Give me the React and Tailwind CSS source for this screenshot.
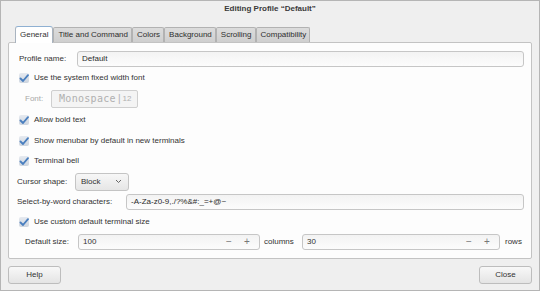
import React from 'react';

const FONT = { fontFamily: '"Liberation Sans", Arial, sans-serif' };

function Check() {
  return (
    <span className="w-[10px] h-[10px] rounded-[2px] bg-gradient-to-b from-[#e6eaf0] to-[#cdd5df] flex items-center justify-center shrink-0">
      <svg width="10" height="9" viewBox="0 0 10 9">
        <path d="M1.5 4.5 L4 7 L9 1.2" fill="none" stroke="#4a7fbf" strokeWidth="1.8" strokeLinecap="round" strokeLinejoin="round" />
      </svg>
    </span>
  );
}

function CheckRow({ label, h }) {
  return (
    <div className={`flex items-center gap-[5px] pl-[10px] ${h}`}>
      <Check />
      <span>{label}</span>
    </div>
  );
}

function Field({ value, className = '' }) {
  return (
    <div className={`h-[16px] border border-[#c6c6c6] rounded-[3px] bg-gradient-to-b from-[#f3f3f3] to-[#fcfcfc] flex items-center px-[4px] text-[#2a2a2a] ${className}`}>
      {value}
    </div>
  );
}

function Spin({ value, className = '' }) {
  return (
    <div className={`h-[16px] border border-[#c6c6c6] rounded-[3px] bg-gradient-to-b from-[#f3f3f3] to-[#fcfcfc] flex items-center pl-[4px] pr-[3px] ${className}`}>
      <span className="flex-1">{value}</span>
      <span className="w-[18px] text-center text-[#777] text-[10px]">−</span>
      <span className="w-[18px] text-center text-[#777] text-[10px]">+</span>
    </div>
  );
}

const tabs = ['Title and Command', 'Colors', 'Background', 'Scrolling', 'Compatibility'];

export default function App() {
  return (
    <div style={FONT} className="w-[540px] h-[291px] bg-[#efefef] border border-[#b5b5b5] flex flex-col text-[8px] text-[#333] leading-none overflow-hidden">
      {/* Title */}
      <div className="h-[16px] flex items-center justify-center font-bold text-[#3a3a3a]">
        Editing Profile “Default”
      </div>

      {/* Tabs */}
      <div className="h-[25px] flex items-end pl-[14px] relative z-10">
        <div className="h-[17px] px-[4px] flex items-center bg-white border border-b-0 border-[#a9b4c0] border-t-[#8fb0d2] rounded-t-[3px] -mb-px">
          General
        </div>
        {tabs.map((t) => (
          <div key={t} className="h-[15px] pl-[4px] pr-[3px] flex items-center bg-gradient-to-b from-[#dcdcdc] to-[#cfcfcf] border border-b-0 border-[#b2b2b2] rounded-t-[2px] text-[#2e2e2e]">
            {t}
          </div>
        ))}
      </div>

      {/* Panel */}
      <div className="mx-[7px] h-[217px] bg-[#fdfdfd] border border-[#c3c3c3] rounded-[2px] pt-[7px] flex flex-col">
        <div className="h-[17px] flex items-center pl-[10px] pr-[7px]">
          <span className="w-[58px]">Profile name:</span>
          <Field value="Default" className="flex-1" />
        </div>
        <CheckRow label="Use the system fixed width font" h="h-[22px]" />
        <div className="h-[20px] flex items-center pl-[16px]">
          <span className="w-[26px] text-[#a8a8a8]">Font:</span>
          <div className="h-[18px] w-[87px] border border-[#cfcfcf] rounded-[2px] bg-[#f4f4f4] flex items-center pl-[7px] text-[#b0b0b0]">
            <span style={{ fontFamily: '"DejaVu Sans Mono", monospace' }} className="text-[10px] tracking-[0.3px]">Monospace</span>
            <span className="mx-[2px] text-[10px]">|</span>
            <span>12</span>
          </div>
        </div>
        <CheckRow label="Allow bold text" h="h-[22px]" />
        <CheckRow label="Show menubar by default in new terminals" h="h-[20px]" />
        <CheckRow label="Terminal bell" h="h-[20px]" />
        <div className="h-[21px] flex items-center pl-[8px]">
          <span className="w-[58px]">Cursor shape:</span>
          <div className="h-[18px] w-[54px] border border-[#c4c4c4] rounded-[3px] bg-gradient-to-b from-[#f7f7f7] to-[#e6e6e6] flex items-center pl-[5px] pr-[6px] justify-between">
            <span>Block</span>
            <svg width="7" height="5" viewBox="0 0 7 5">
              <path d="M1 1 L3.5 3.5 L6 1" fill="none" stroke="#666" strokeWidth="1" />
            </svg>
          </div>
        </div>
        <div className="h-[20px] flex items-center pl-[8px] pr-[7px]">
          <span className="w-[109px]">Select-by-word characters:</span>
          <Field value="-A-Za-z0-9,./?%&#:_=+@~" className="flex-1" />
        </div>
        <CheckRow label="Use custom default terminal size" h="h-[20px]" />
        <div className="h-[20px] flex items-center pl-[16px] pr-[9px]">
          <span className="w-[53px]">Default size:</span>
          <Spin value="100" className="w-[182px]" />
          <span className="w-[42px] pl-[4px]">columns</span>
          <Spin value="30" className="w-[198px]" />
          <span className="pl-[5px]">rows</span>
        </div>
      </div>

      {/* Buttons */}
      <div className="flex-1 flex items-center justify-between px-[7px]">
        <button className="h-[18px] w-[53px] border border-[#bdbdbd] rounded-[3px] bg-gradient-to-b from-[#f8f8f8] to-[#e4e4e4] text-[8px]">Help</button>
        <button className="h-[18px] w-[53px] border border-[#bdbdbd] rounded-[3px] bg-gradient-to-b from-[#f8f8f8] to-[#e4e4e4] text-[8px]">Close</button>
      </div>
    </div>
  );
}
